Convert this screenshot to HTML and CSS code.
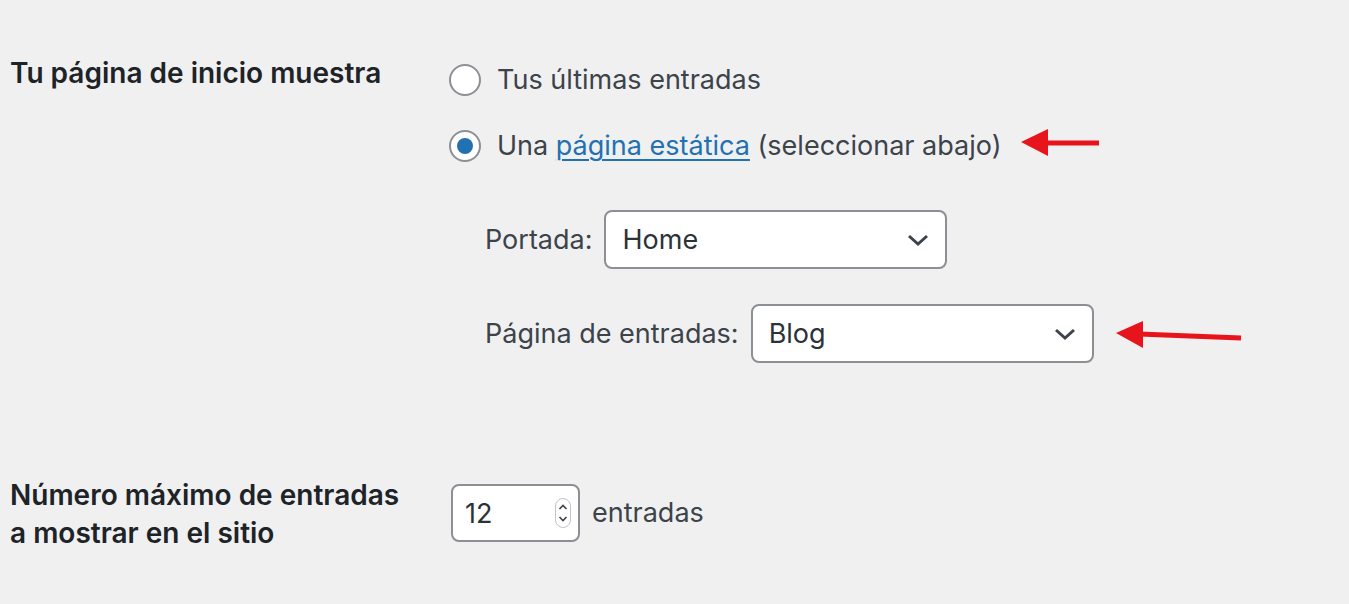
FILE: index.html
```html
<!DOCTYPE html>
<html lang="es">
<head>
    <meta charset="UTF-8">
    <meta name="viewport" content="width=device-width, initial-scale=1.0">
    <title>Ajustes de lectura</title>
    <link rel="stylesheet" href="styles.css">
</head>
<body>
    <form class="form-table">
        <div class="form-row row-front">
            <div class="row-label">Tu página de inicio muestra</div>
            <div class="row-field">
                <label class="radio">
                    <input type="radio" name="show_on_front" value="posts">
                    <span>Tus últimas entradas</span>
                </label>
                <label class="radio">
                    <input type="radio" name="show_on_front" value="page" checked>
                    <span>Una <a href="#">página estática</a> (seleccionar abajo)</span>
                    <svg class="arrow arrow-one" width="82" height="30" viewBox="0 0 82 30">
                        <line x1="24" y1="15" x2="79" y2="15" stroke="#e8141b" stroke-width="5"/>
                        <polygon points="1,14 28,1 28,28" fill="#e8141b"/>
                    </svg>
                </label>

                <div class="page-select first">
                    <label for="page_on_front">Portada:</label>
                    <div class="select-wrap">
                        <select id="page_on_front">
                            <option>Home</option>
                        </select>
                        <svg class="chevron" width="22" height="14" viewBox="0 0 22 14"><path d="M2 3 L11 11 L20 3" fill="none" stroke="#3c434a" stroke-width="3"/></svg>
                    </div>
                </div>
                <div class="page-select">
                    <label for="page_for_posts">Página de entradas:</label>
                    <div class="select-wrap">
                        <select id="page_for_posts">
                            <option>Blog</option>
                        </select>
                        <svg class="chevron" width="22" height="14" viewBox="0 0 22 14"><path d="M2 3 L11 11 L20 3" fill="none" stroke="#3c434a" stroke-width="3"/></svg>
                    </div>
                    <svg class="arrow arrow-two" width="128" height="30" viewBox="0 0 128 30">
                        <line x1="24" y1="14" x2="126" y2="18" stroke="#e8141b" stroke-width="5"/>
                        <polygon points="1,13 28,1 28,28" fill="#e8141b"/>
                    </svg>
                </div>
            </div>
        </div>

        <div class="form-row row-posts">
            <div class="row-label">Número máximo de entradas a mostrar en el sitio</div>
            <div class="row-field">
                <div class="number-field">
                    <div class="number-wrap">
                        <input type="number" id="posts_per_page" value="12" min="1" step="1">
                        <svg class="spinner" width="16" height="30" viewBox="0 0 16 30">
                            <rect x="0.5" y="0.5" width="15" height="29" rx="7.5" fill="#fff" stroke="#c3c4c7"/>
                            <path d="M4.5 11 L8 7.5 L11.5 11" fill="none" stroke="#3c434a" stroke-width="1.6"/>
                            <path d="M4.5 19 L8 22.5 L11.5 19" fill="none" stroke="#3c434a" stroke-width="1.6"/>
                        </svg>
                    </div>
                    <span class="unit">entradas</span>
                </div>
            </div>
        </div>
    </form>
</body>
</html>
```

FILE: styles.css
```css
body {
    margin: 0;
    padding: 0 0 0 10px;
    background-color: #f0f0f1;
    font-family: Inter, "Noto Sans", sans-serif;
    color: #3c434a;
}
.form-row {
    display: grid;
    grid-template-columns: 439px 1fr;
}
.row-front {
    padding-top: 54px;
}
.row-posts {
    margin-top: 113px;
}
.row-label {
    font-size: 28px;
    font-weight: 600;
    line-height: 38px;
    color: #1d2327;
    max-width: 400px;
}
.row-field {
    font-size: 27px;
    line-height: 40px;
}
.row-front .row-field {
    padding-top: 6px;
}
.radio {
    display: flex;
    align-items: center;
}
.radio + .radio {
    margin-top: 26px;
}
.radio input {
    appearance: none;
    flex: none;
    width: 32px;
    height: 32px;
    margin: 0 16px 0 0;
    border: 2px solid #8c8f94;
    border-radius: 50%;
    background-color: #fff;
    position: relative;
}
.radio input:checked::before {
    content: "";
    position: absolute;
    top: 6px;
    left: 6px;
    width: 16px;
    height: 16px;
    border-radius: 50%;
    background-color: #2271b1;
}
.radio a {
    color: #2271b1;
    text-decoration: underline;
    text-underline-offset: 4px;
    text-decoration-thickness: 2px;
}
.arrow-one {
    margin-left: 19px;
    margin-top: -6px;
}
.page-select {
    display: flex;
    align-items: center;
    padding-left: 36px;
    margin-top: 35px;
}
.page-select.first {
    margin-top: 44px;
}
.page-select label {
    margin-right: 12px;
}
.select-wrap {
    position: relative;
}
select {
    appearance: none;
    display: block;
    width: 343px;
    height: 59px;
    padding: 0 50px 0 16px;
    border: 2px solid #8c8f94;
    border-radius: 8px;
    background-color: #fff;
    font-family: inherit;
    font-size: 27px;
    color: #2c3338;
}
.chevron {
    position: absolute;
    right: 18px;
    top: 23px;
    pointer-events: none;
}
.arrow-two {
    margin-left: 21px;
    margin-top: 2px;
}
.row-posts .row-field {
    padding-top: 8px;
}
.number-field {
    display: flex;
    align-items: center;
}
.number-wrap {
    position: relative;
    margin-left: 2px;
}
input[type="number"] {
    appearance: textfield;
    display: block;
    width: 129px;
    height: 58px;
    box-sizing: border-box;
    padding: 0 12px;
    border: 2px solid #8c8f94;
    border-radius: 8px;
    background-color: #fff;
    font-family: inherit;
    font-size: 27px;
    color: #2c3338;
}
input[type="number"]::-webkit-inner-spin-button,
input[type="number"]::-webkit-outer-spin-button {
    -webkit-appearance: none;
    margin: 0;
}
.spinner {
    position: absolute;
    left: 104px;
    top: 14px;
}
.unit {
    margin-left: 12px;
}
```
